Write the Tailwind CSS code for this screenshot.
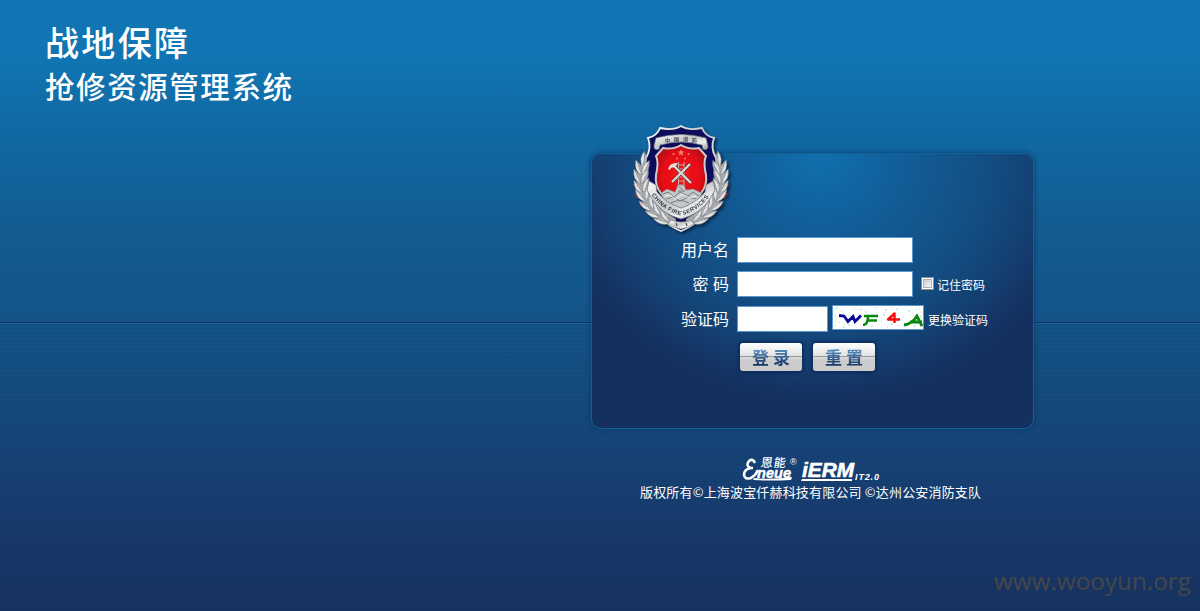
<!DOCTYPE html>
<html lang="zh-CN">
<head>
<meta charset="utf-8">
<title>抢修资源管理系统</title>
<script src="https://cdn.jsdelivr.net/npm/@tailwindcss/browser@4"></script>
</head>
<body class="h-[611px] w-[1200px] overflow-hidden bg-[#17335f] font-['Noto_Sans_CJK_SC',sans-serif] text-white">
<div class="relative flex h-full flex-col bg-[linear-gradient(180deg,#1075b2_0px,#1075b2_60px,#116aa4_120px,#125b91_235px,#135488_322px,#15467a_430px,#17396b_530px,#17325f_611px)]">
  <!-- fine dotted texture and horizon line -->
  <div class="absolute inset-x-0 top-[322px] bottom-0 border-t border-[#152f60] bg-[radial-gradient(circle,#10285028_0.8px,transparent_1.6px)] bg-[size:4px_4px]"><div class="h-px bg-[#1467a0]"></div></div>

  <header class="relative h-[153px] pt-[20px] pl-[45px]">
    <svg class="block h-[92px] w-[260px] overflow-visible" fill="#fff" font-family="'Noto Sans CJK SC',sans-serif" font-weight="500">
      <text x="0" y="36" font-size="34" textLength="143">战地保障</text>
      <text x="0" y="78" font-size="29.500" textLength="247">抢修资源管理系统</text>
    </svg>
  </header>

  <main class="relative ml-[591px] h-[276px] w-[443px] shrink-0 rounded-[10px] border border-[#0b6397] bg-[radial-gradient(ellipse_265px_245px_at_228px_0px,#1070ac_0%,#1164a0_20%,#125992_40%,#134d82_65%,#143e70_85%,#14305e_100%)] pt-[83px] pl-[65px] shadow-[0_0_4px_1px_#0b386cb3]">
    <svg class="absolute top-[-30px] left-[37px] h-[112px] w-[104px] overflow-visible" viewBox="0 0 104 112">
      <defs>
        <linearGradient id="silver" x1="0" y1="0" x2="1" y2="1"><stop offset="0" stop-color="#fff"/><stop offset=".45" stop-color="#c4c6c8"/><stop offset=".7" stop-color="#f0f0f0"/><stop offset="1" stop-color="#96989c"/></linearGradient>
        <linearGradient id="leaf"><stop offset="0" stop-color="#f6f6f6"/><stop offset=".5" stop-color="#d6d7d8"/><stop offset=".55" stop-color="#95989c"/><stop offset="1" stop-color="#c5c7ca"/></linearGradient>
        <radialGradient id="red"><stop offset="0" stop-color="#f41714"/><stop offset=".75" stop-color="#e60c13"/><stop offset="1" stop-color="#be0713"/></radialGradient>
        <filter id="shade" x="-20%" y="-20%" width="140%" height="140%"><feDropShadow dx="2" dy="2" stdDeviation="1.500" flood-color="#06132d" flood-opacity=".8"/></filter>
        <path id="blade" d="M0 1Q-5.500 -6 0 -15Q5.500 -6 0 1Z"/>
        <g id="branch">
          <path d="M15 34Q7 48 9 64Q13 83 28 93L46 103L47 95Q30 86 23 74Q17 62 18 46Z" fill="#a5a6a9"/>
          <path d="M5 60l2 5M6 69l3 5M11 80l4 4M19 89l4 3M29 96l4 2" stroke="#a03a40" stroke-width="1.500" fill="none"/>
          <g fill="url(#leaf)" stroke="#85888c" stroke-width=".4">
            <use href="#blade" transform="translate(14 42) rotate(5)"/>
            <use href="#blade" transform="translate(12 50) rotate(-20)"/><use href="#blade" transform="translate(14 50) rotate(25)"/>
            <use href="#blade" transform="translate(11 59) rotate(-24)"/><use href="#blade" transform="translate(13 59) rotate(25)"/>
            <use href="#blade" transform="translate(13 69) rotate(-33)"/><use href="#blade" transform="translate(15 68) rotate(18)"/>
            <use href="#blade" transform="translate(16 77) rotate(-40)"/><use href="#blade" transform="translate(18 76) rotate(8)"/>
            <use href="#blade" transform="translate(22 86) rotate(-54)"/><use href="#blade" transform="translate(24 84) rotate(-8)"/>
            <use href="#blade" transform="translate(30 93) rotate(-66)"/><use href="#blade" transform="translate(31 91) rotate(-24)"/>
            <use href="#blade" transform="translate(39 99) rotate(-74)"/><use href="#blade" transform="translate(40 97) rotate(-36)"/>
          </g>
        </g>
      </defs>
      <g filter="url(#shade)">
        <path d="M52 2Q60 7 73 4Q76 12 85 14Q81 24 87 34C92 65 86 92 52 107C18 92 12 65 17 34Q23 24 19 14Q28 12 31 4Q44 7 52 2Z" fill="#080d5b" stroke="url(#silver)" stroke-width="1.800"/>
        <use href="#branch"/><use href="#branch" transform="translate(104 0) scale(-1 1)"/>
        <path d="M52 21Q60 26 70 24L77 32Q74 38 77 51C79 66 67 77 52 84C37 77 25 66 27 51Q30 38 27 32L34 24Q44 26 52 21Z" fill="url(#red)" stroke="#d0cccb" stroke-width="2"/>
        <path d="M27 14Q52 7 77 14L79 23Q78 27 74 25L73 21Q52 15 31 21L30 25Q25 27 25 22Z" fill="url(#silver)" stroke="#808387" stroke-width=".7"/>
        <g font-family="'Noto Sans CJK SC',sans-serif" font-size="5" font-weight="700" fill="#333b46"><text x="36" y="17.500">中</text><text x="45" y="16.500">国</text><text x="54" y="16.500">消</text><text x="63" y="17.500">防</text></g>
        <path d="M52 25l1 2.400h2.700l-2.200 1.700 .8 2.700L52 30.200l-2.300 1.600 .8-2.700L48.300 27.400H51Z" fill="#e9806b"/>
        <g fill="#e68474"><circle cx="44.500" cy="30" r="1"/><circle cx="59.500" cy="30" r="1"/><circle cx="48" cy="34.500" r="1"/><circle cx="56" cy="34.500" r="1"/></g>
        <path d="M49.500 38V64M55 38V64M49.500 41H55M49.500 45H55M49.500 49H55M49.500 53H55M49.500 57H55M49.500 61H55" fill="none" stroke="#c4a7a0" stroke-width="1.100"/>
        <path d="M45 42L62 59M61 40L43 58" stroke="#67313d" stroke-width="3.600"/><path d="M45 42L62 59M61 40L43 58" stroke="#ded9d2" stroke-width="2.300"/>
        <path d="M39 45Q41 38 49 39L46 43L42 44L41 46Z" fill="#e3dfd8"/>
        <path d="M32 69L38 65L46 68L49 61H55L57 66L64 65L73 69L68 79L52 87L36 79Z" fill="#c5c7c9" stroke="#777b80" stroke-width=".6"/>
        <path d="M34 70l5-2 6 5 6-5 8 4 5-4 6 4M37 75l8-2 6 4 8-4 8 2M50 63l4 3M49 67h7M42 79q9-5 18 0" fill="none" stroke="#777d83" stroke-width="1"/><path d="M36 72l5-1 6 4 6-5 7 4 7-2" fill="none" stroke="#fff" stroke-width=".8"/>
        <path d="M20 57L18 66L22 73Q32 90 52 95Q72 90 82 73L86 66L84 57L77 61L76 68Q67 79 52 84Q37 79 28 68L27 61Z" fill="url(#silver)" stroke="#73777b" stroke-width=".8"/>
        <path id="arc" d="M22 70Q33 87 52 91.500Q71 87 82 70" fill="none"/>
        <text font-family="Liberation Sans,sans-serif" font-size="5.800" font-weight="700" fill="#303841"><textPath href="#arc" startOffset="1" textLength="71">CHINA FIRE SERVICES</textPath></text>
        <path d="M42 96Q52 100 62 96L65 100Q58 104 52 105Q46 104 39 100Z" fill="url(#silver)" stroke="#777" stroke-width=".5"/><path d="M47 99l1 3M57 99l1 3" stroke="#555" stroke-width="1.200"/>
      </g>
    </svg>

    <form class="flex flex-col text-[16px]" onsubmit="return false">
      <div class="flex h-[34px]"><label for="user" class="mr-[8px] w-[72px] text-right leading-[25px]">用户名</label><input id="user" class="h-[26px] w-[176px] border border-[#5b98d2] bg-white"></div>
      <div class="flex h-[35px]"><label for="pass" class="mr-[8px] w-[72px] text-right leading-[25px] [word-spacing:1px]">密 码</label><input id="pass" type="password" class="h-[26px] w-[176px] border border-[#5b98d2] bg-white">
        <span class="mt-[6px] ml-[8px] h-[13px] w-[13px] border border-[#8e8f8f] bg-white p-px"><span class="block h-[9px] w-[9px] border border-[#aeb3b9] bg-linear-to-br from-[#c7cbd4] to-[#f6f6f6]"></span></span><span class="ml-[3px] text-[12px] leading-[27px] whitespace-nowrap">记住密码</span></div>
      <div class="flex h-[37px]"><label for="code" class="mr-[8px] w-[72px] text-right leading-[25px]">验证码</label><input id="code" class="h-[26px] w-[91px] border border-[#5b98d2] bg-white">
        <svg class="mt-[-1px] ml-[4px] h-[25px] w-[92px] border border-[#5b98d2] bg-white" viewBox="0 0 90 23">
          <path d="M3 2h2M8 5h1M20 3h1M32 6h2M43 2h1M52 4h2M63 3h2M75 5h2M83 3h1M6 16h1M15 19h2M25 15h1M38 20h2M48 15h1M58 18h2M66 20h1M80 20h2M50 9h2M2 20h1M70 11h1M87 10h1M28 3h1M10 21h2M54 21h1" stroke="#8be3dc"/>
          <path d="M1 7q4 6 0 12M86 1q1 5 3 7M21 1q3 4 8 3M57 1l4 3" fill="none" stroke="#ddd" stroke-width=".6"/>
          <path d="M6 9.500L11 10L15 15.500L20 10.500L22 15.500L28 9.500" fill="none" stroke="#080894" stroke-width="2.800"/>
          <path d="M30 19Q35 19 35 10M31 10H45M35 14.500H44" fill="none" stroke="#07870c" stroke-width="2.500"/>
          <path d="M61.500 17V7.500L55 13.500H67" fill="none" stroke="#fc080a" stroke-width="2.400" stroke-linejoin="round"/>
          <path d="M71 19Q79 18 84 10L89 20M77 16H89" fill="none" stroke="#07870c" stroke-width="2.800"/>
        </svg><span class="ml-[4px] text-[12px] leading-[27px] whitespace-nowrap">更换验证码</span></div>
      <div class="ml-[83px] flex gap-[11px]">
        <button class="flex h-[28px] w-[62px] items-center justify-center rounded-[3px] bg-[linear-gradient(180deg,#fff_0px,#e2e2e2_13px,#999_13px,#999_14px,#ddd_14px,#ccc_17px,#ccc_28px)] text-[17px] leading-[26px] font-bold whitespace-nowrap shadow-[0_0_3px_2px_#0b2454aa]"><span class="bg-linear-to-b from-[#5a94c6] from-20% to-[#12305f] to-85% bg-clip-text text-transparent">登 录</span></button>
        <button class="flex h-[28px] w-[62px] items-center justify-center rounded-[3px] bg-[linear-gradient(180deg,#fff_0px,#e2e2e2_13px,#999_13px,#999_14px,#ddd_14px,#ccc_17px,#ccc_28px)] text-[17px] leading-[26px] font-bold whitespace-nowrap shadow-[0_0_3px_2px_#0b2454aa]"><span class="bg-linear-to-b from-[#5a94c6] from-20% to-[#12305f] to-85% bg-clip-text text-transparent">重 置</span></button>
      </div>
    </form>
  </main>

  <footer class="relative flex flex-col pt-[25px]">
    <svg class="ml-[740px] h-[29px] w-[142px]" viewBox="0 0 142 29" fill="#fff">
      <path d="M15 9Q13 4 9 7Q5 12 11 14Q4 15 4 21Q5 26 11 24Q16 21 18 16M13 14H9" fill="none" stroke="#fff" stroke-width="2.600"/>
      <g font-family="Liberation Sans,sans-serif" font-weight="700" font-style="italic">
        <text x="17" y="24" font-size="14" textLength="34" lengthAdjust="spacingAndGlyphs" stroke="#fff" stroke-width=".4">neue</text>
        <text x="62" y="23" font-size="21" textLength="52" lengthAdjust="spacingAndGlyphs" stroke="#fff" stroke-width=".6">iERM</text>
        <text x="115" y="26" font-size="9" textLength="24">IT2.0</text>
      </g>
      <path d="M14 24Q32 26 52 23L51 26Q30 27 13 26ZM62 25H112V27H61Z"/>
      <text x="20" y="12.500" font-family="'Noto Sans CJK SC',sans-serif" font-size="12" font-weight="500" textLength="25" transform="skewX(-8) translate(2 0)">恩能</text>
      <text x="50" y="11" font-family="Liberation Sans,sans-serif" font-size="9">®</text>
    </svg>
    <p class="ml-[640px] h-[20px]"><svg class="block h-[20px] w-[345px] overflow-visible" fill="#fff" font-size="13"><text x="0" y="13.500" textLength="341">版权所有©上海波宝仟赫科技有限公司 ©达州公安消防支队</text></svg></p>
  </footer>
  <svg class="absolute top-[560px] left-[985px] h-[45px] w-[215px]"><text x="9" y="30" font-family="'Open Sans','Noto Sans',sans-serif" font-size="24" fill="#454749" textLength="197" lengthAdjust="spacingAndGlyphs">www.wooyun.org</text></svg>
</div>
</body>
</html>
